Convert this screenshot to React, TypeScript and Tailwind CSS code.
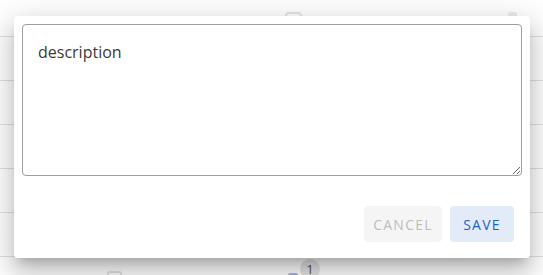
import { useState } from "react";

const MIDDLE_ROWS = [1, 2, 3, 4, 5];

export default function App() {
  const [text, setText] = useState("description");

  return (
    <div
      className="relative h-[275px] w-[543px] overflow-hidden bg-white"
      style={{ fontFamily: '"Open Sans", "Noto Sans", sans-serif' }}
    >
      {/* table behind the popover */}
      <div className="flex flex-col">
        <div className="flex h-[37px] items-start border-b border-[#e0e0e0] pt-[12px]">
          <span className="ml-[285px] h-[12px] w-[17px] rounded-[4px] border-2 border-[#e4e4e4]" />
          <span className="ml-[206px] h-[14px] w-[9px] rounded-[2px] bg-[#ececec]" />
        </div>
        {MIDDLE_ROWS.map((r) => (
          <div key={r} className="h-[44px] shrink-0 border-b border-[#e0e0e0]" />
        ))}
        <div className="flex h-[44px] items-start">
          <span className="ml-[107px] mt-[14px] h-[14px] w-[15px] rounded-[3px] border-2 border-[#e2e2e2]" />
          <span className="ml-[166px] mt-[16px] h-[10px] w-[10px] rounded-[2px] bg-[#9cbbe8]" />
          <span className="ml-[2px] mt-[2px] flex h-[20px] w-[20px] items-center justify-center rounded-full bg-[#e4e4e4] text-[13px] leading-none text-[#555]">
            1
          </span>
        </div>
      </div>

      {/* popover */}
      <div className="absolute left-[14px] top-[16px] w-[516px] rounded-[4px] bg-white p-[8px] pb-[16px] shadow-[0px_8px_10px_-5px_rgba(0,0,0,0.2),0px_16px_24px_2px_rgba(0,0,0,0.14),0px_6px_30px_5px_rgba(0,0,0,0.12)]">
        <textarea
          value={text}
          onChange={(e) => setText(e.target.value)}
          className="block h-[152px] w-full rounded-[4px] border border-[#9e9e9e] px-[15px] pt-[15px] text-[16px] leading-[24px] text-[#3a3a3a] outline-none"
        />
        <div className="mt-[30px] flex justify-end gap-[8px] pr-[8px]">
          <button
            type="button"
            disabled
            className="flex h-[36px] w-[78px] items-center justify-center rounded-[4px] bg-[#f5f5f5] text-[14px] font-medium tracking-[1.25px] text-[#bdbdbd]"
          >
            CANCEL
          </button>
          <button
            type="button"
            className="flex h-[36px] w-[64px] items-center justify-center rounded-[4px] bg-[#e3ebf8] text-[14px] font-medium tracking-[1.25px] text-[#1f62c4]"
          >
            SAVE
          </button>
        </div>
      </div>
    </div>
  );
}
